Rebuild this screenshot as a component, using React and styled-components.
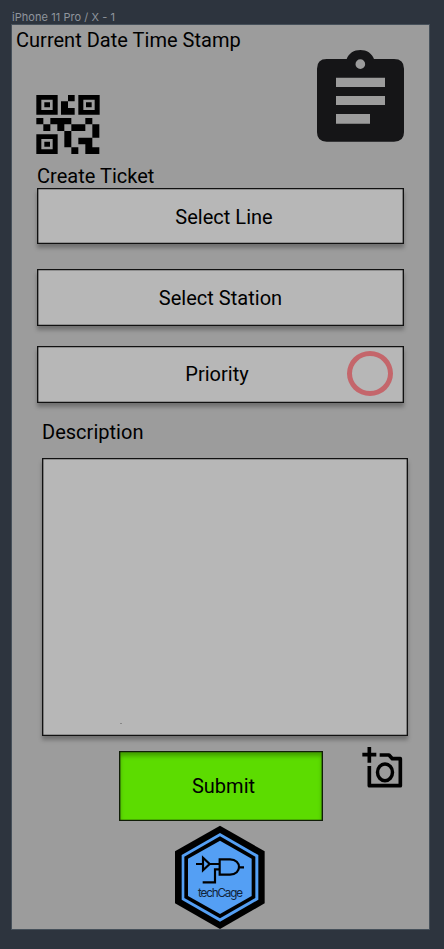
import React from "react";
import styled, { createGlobalStyle } from "styled-components";

const GlobalStyle = createGlobalStyle`
  *, *::before, *::after { box-sizing: border-box; }
  html, body { margin: 0; background: #2d343e; }
  body { font-family: Roboto, "Liberation Sans", sans-serif; color: #000; }
  svg { display: block; }
`;

const Canvas = styled.div`
  height: 949px;
  padding: 11px 14px 0 12px;
  overflow: hidden;
  background: #2d343e;
`;

const FrameLabel = styled.div`
  height: 14px;
  font: 400 11px/12px Inter, sans-serif;
  letter-spacing: 0.06px;
  color: #8f959d;
  white-space: nowrap;
`;

const Phone = styled.main`
  display: flex;
  flex-direction: column;
  width: 417px;
  height: 904px;
  background: #9c9c9c;
  box-shadow: 0 0 0 1px #46505a;

  & > * { flex-shrink: 0; }
`;

const Header = styled.header`
  display: flex;
  justify-content: space-between;
  height: 139px;
  padding-left: 4px;
`;

const HeaderInfo = styled.div`
  display: flex;
  flex-direction: column;
  gap: 43px;
`;

const Text = styled.span`
  font-size: 20px;
  line-height: 24px;
  letter-spacing: 0.02px;
  white-space: nowrap;
`;

const Timestamp = styled(Text)`
  margin-top: 3px;
`;

const QrIcon = styled.svg`
  width: 80px;
  height: 76px;
  margin: -9px 0 0 12px;
`;

const ClipboardIcon = styled.svg`
  width: 110px;
  height: 110px;
  margin: 15px 14px 0 0;
`;

const Form = styled.section`
  display: flex;
  flex-direction: column;
  padding-left: 25px;
`;

const Field = styled.button`
  display: grid;
  grid-template-columns: 148px 1fr;
  align-items: center;
  width: 367px;
  height: ${(p) => p.$height || 57}px;
  margin: 0 0 ${(p) => p.$gap}px;
  padding: 0;
  border: 1px solid #111;
  background: #b7b7b7;
  color: #000;
  font-family: inherit;
  box-shadow: inset 0 0 0 0.35px #111, 0 4px 4px rgba(0, 0, 0, 0.28);
`;

const FieldText = styled(Text)`
  grid-column: 1 / -1;
  grid-row: 1;
  justify-self: center;
  margin: ${(p) => p.$nudge || "0"};
`;

const PriorityRing = styled.i`
  grid-column: 2;
  grid-row: 1;
  justify-self: end;
  width: 46px;
  height: 45px;
  margin-right: 10px;
  margin-top: -2px;
  border: 5px solid #c4666b;
  border-radius: 50%;
`;

const FormTitle = styled(Text)`
  height: 24px;
`;

const DescriptionLabel = styled(Text)`
  margin: -1px 0 14px 5px;
`;

const DescriptionBox = styled.div`
  display: flex;
  align-items: flex-end;
  width: 366px;
  height: 278px;
  margin-left: 5px;
  padding: 0 0 11px 77px;
  border: 1px solid #111;
  background: #b7b7b7;
  box-shadow: inset 0 0 0 0.35px #111, 0 4px 4px rgba(0, 0, 0, 0.28);
`;

const Speck = styled.i`
  width: 2px;
  height: 1px;
  background: #888;
`;

const Actions = styled.div`
  display: flex;
  justify-content: space-between;
  height: 84px;
  padding: 15px 15px 0 107px;
`;

const Submit = styled.button`
  width: 204px;
  height: 70px;
  margin: 0 0 0 -0.5px;
  padding: 0 0 1px 6px;
  border: 1px solid #101d08;
  background: #5cdc00;
  box-shadow: inset 0 0 0 0.35px #101d08, inset 0 4px 4px rgba(0, 0, 0, 0.28);
  color: #000;
  font-family: inherit;
`;

const CameraIcon = styled.svg`
  width: 64px;
  height: 56px;
  margin-top: -11px;
`;

const LogoIcon = styled.svg`
  width: 110px;
  height: 109px;
  margin: 0 0 0 153px;
`;

function Qr() {
  return (
    <QrIcon viewBox="0 0 240 228" aria-label="QR code">
      <path
        fillRule="evenodd"
        d="M25 27H89V86H25ZM40 41V72H74V41ZM49 49H66V64H49Z
           M151 27H215V86H151ZM166 41V72H200V41ZM174 49H191V64H174Z
           M25 145H89V204H25ZM40 159V190H74V159ZM49 167H66V182H49Z"
      />
      <path
        d="M120 27H140V46H120ZM99 46H120V66H140V86H99Z
           M25 96H46V115H25ZM67 96H130V115H109V135H88V115H67Z
           M172 96H193V115H172ZM46 115H67V135H46Z
           M130 115H172V135H130ZM193 115H214V155H193Z
           M109 135H130V184H109ZM130 184H151V204H130Z
           M151 155H193V184H214V204H172V175H151Z"
      />
    </QrIcon>
  );
}

function Clipboard() {
  return (
    <ClipboardIcon viewBox="0 0 330 330" aria-label="Tickets">
      <path
        fill="#151517"
        fillRule="evenodd"
        d="M65 57H125C131 40 147 30 166 30S201 40 207 57H267Q297 57 297 86V277Q297 305 267 305H65Q36 305 36 277V86Q36 57 65 57Z
           M166 58A14.5 14.5 0 1 0 166 87A14.5 14.5 0 1 0 166 58Z
           M93 113V141H240V113ZM93 168V195H240V168ZM93 222V251H195V222Z"
      />
    </ClipboardIcon>
  );
}

function Camera() {
  return (
    <CameraIcon viewBox="0 0 192 168" fill="none" stroke="#000" aria-label="Add photo">
      <path strokeWidth="11" d="M58 21V68M37 44H79" />
      <path strokeWidth="11" strokeLinejoin="round" d="M58 78V137H151V56H127L117 45H89" />
      <ellipse cx="105" cy="97" rx="22.5" ry="25" strokeWidth="10.5" />
    </CameraIcon>
  );
}

function Logo() {
  return (
    <LogoIcon viewBox="0 0 330 327" fill="none" aria-label="techCage">
      <path fill="#000" d="M165 17L299 94V250L165 327L30 250V94Z" />
      <path fill="#549ff4" d="M165 39L280 105V239L165 305L50 239V105Z" />
      <path fill="#000" d="M165 49L271 110V234L165 295L58 234V110Z" />
      <path fill="#549ff4" d="M165 62L260 116V228L165 282L69 228V116Z" />
      <g stroke="#000" strokeWidth="6.5">
        <path d="M93 132H114M114 113V151L134 132ZM134 132H164M113 187H150V148H164M222 142H237" />
        <path d="M164 118H195C231 118 231 164 195 164H164Z" />
      </g>
      <text
        x="99"
        y="230"
        fill="#10243a"
        fontFamily="Inter, sans-serif"
        fontSize="35"
        textLength="135"
        lengthAdjust="spacing"
      >
        techCage
      </text>
    </LogoIcon>
  );
}

export default function App() {
  return (
    <>
      <GlobalStyle />
      <Canvas>
        <FrameLabel>iPhone 11 Pro / X - 1</FrameLabel>
        <Phone>
          <Header>
            <HeaderInfo>
              <Timestamp>Current Date Time Stamp</Timestamp>
              <Qr />
            </HeaderInfo>
            <Clipboard />
          </Header>
          <Form>
            <FormTitle>Create Ticket</FormTitle>
            <Field $height={56} $gap={25}>
              <FieldText $nudge="2px 0 0 7px">Select Line</FieldText>
            </Field>
            <Field $gap={20}>
              <FieldText>Select Station</FieldText>
            </Field>
            <Field $gap={18}>
              <FieldText $nudge="-2px 7px 0 0">Priority</FieldText>
              <PriorityRing />
            </Field>
            <DescriptionLabel>Description</DescriptionLabel>
            <DescriptionBox>
              <Speck />
            </DescriptionBox>
          </Form>
          <Actions>
            <Submit>
              <Text>Submit</Text>
            </Submit>
            <Camera />
          </Actions>
          <Logo />
        </Phone>
      </Canvas>
    </>
  );
}
